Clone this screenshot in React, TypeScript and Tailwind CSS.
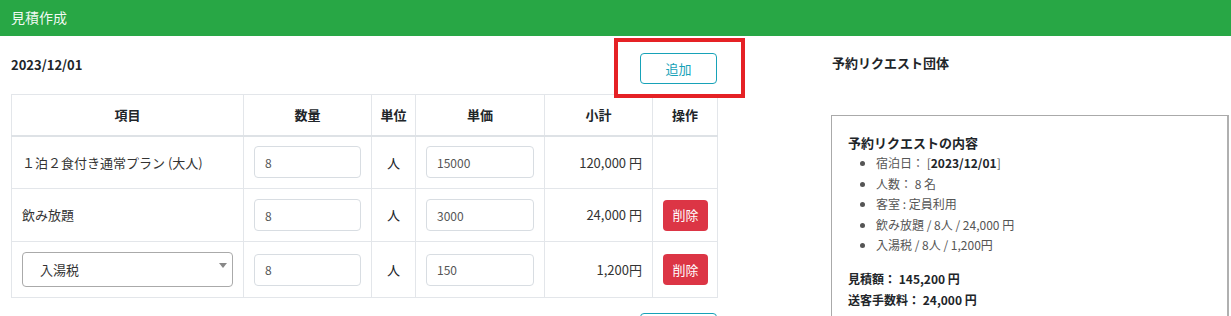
import React from "react";

const inputCls =
  "w-full h-[32px] rounded-[4px] border border-[#d8dde2] bg-white px-[10px] text-[12px] text-[#555] outline-none";

function QtyInput({ v }: { v: string }) {
  return <input className={inputCls} defaultValue={v} readOnly />;
}

function DelBtn() {
  return (
    <button className="h-[31px] w-[45px] rounded-[4px] bg-[#dc3545] text-[13px] text-white">
      削除
    </button>
  );
}

export default function App() {
  const td = "border border-[#e3e6ea] px-[10px] align-middle";
  return (
    <div className="min-h-screen bg-white font-['Noto_Sans_CJK_JP',sans-serif] text-[#212529]">
      <div className="h-[36px] bg-[#28a745] px-[11px] flex items-center">
        <span className="text-[14px] text-white/95 -mt-[2px]">見積作成</span>
      </div>
      <div className="flex">
        <div className="w-[717px] pl-[11px] shrink-0">
          <div className="mt-[17px] flex justify-between">
            <div className="mt-[2px] text-[13px] font-bold leading-[20px]">2023/12/01</div>
            <div className="relative">
              <button className="h-[31px] w-[77px] rounded-[4px] border border-[#17a2b8] text-[13px] text-[#17a2b8]">
                追加
              </button>
              <div className="pointer-events-none absolute left-[-26px] right-[-28px] top-[-15px] bottom-[-14px] border-[4px] border-[#e52125]" />
            </div>
          </div>
          <table className="mt-[10px] w-[706px] border-collapse table-fixed text-[13px]">
            <colgroup>
              <col className="w-[232px]" />
              <col className="w-[128px]" />
              <col className="w-[44px]" />
              <col className="w-[129px]" />
              <col className="w-[108px]" />
              <col className="w-[65px]" />
            </colgroup>
            <thead>
              <tr className="h-[41px]">
                {["項目", "数量", "単位", "単価", "小計", "操作"].map((h) => (
                  <th
                    key={h}
                    className="border border-[#e3e6ea] border-b-2 border-b-[#dee2e6] text-center font-bold text-[13px]"
                  >
                    {h}
                  </th>
                ))}
              </tr>
            </thead>
            <tbody>
              <tr className="h-[53px]">
                <td className={td + " text-[#333]"}>１泊２食付き通常プラン (大人)</td>
                <td className={td}>
                  <QtyInput v="8" />
                </td>
                <td className={td + " text-center px-0"}>人</td>
                <td className={td}>
                  <QtyInput v="15000" />
                </td>
                <td className={td + " text-right text-[#333]"}>120,000 円</td>
                <td className={td}></td>
              </tr>
              <tr className="h-[53px]">
                <td className={td + " text-[#333]"}>飲み放題</td>
                <td className={td}>
                  <QtyInput v="8" />
                </td>
                <td className={td + " text-center px-0"}>人</td>
                <td className={td}>
                  <QtyInput v="3000" />
                </td>
                <td className={td + " text-right text-[#333]"}>24,000 円</td>
                <td className={td}>
                  <DelBtn />
                </td>
              </tr>
              <tr className="h-[56px]">
                <td className={td}>
                  <div className="relative flex h-[35px] items-center rounded-[4px] border border-[#aaa] pl-[17px] text-[13px] text-[#333]">
                    入湯税
                    <span className="absolute right-[5px] top-[10px] h-0 w-0 border-x-[4px] border-t-[5px] border-x-transparent border-t-[#888]" />
                  </div>
                </td>
                <td className={td}>
                  <QtyInput v="8" />
                </td>
                <td className={td + " text-center px-0"}>人</td>
                <td className={td}>
                  <QtyInput v="150" />
                </td>
                <td className={td + " text-right text-[#333]"}>1,200円</td>
                <td className={td}>
                  <DelBtn />
                </td>
              </tr>
            </tbody>
          </table>
          <div className="mt-[15px] flex justify-end">
            <button
              aria-label="保存"
              className="h-[31px] w-[77px] rounded-[4px] border border-[#17a2b8]"
            />
          </div>
        </div>
        <div className="pl-[114px] flex-1">
          <div className="mt-[17px] pl-[1px] text-[13px] font-bold leading-[20px]">予約リクエスト団体</div>
          <div className="mt-[42px] w-[398px] border border-[#aaa] border-r-2 border-r-[#b0b0b0] px-[16px] pt-[17px] pb-[20px]">
            <div className="text-[13px] font-bold leading-[20px]">予約リクエストの内容</div>
            <ul className="list-disc pl-[28px] text-[12px] leading-[20.5px] text-[#555]">
              <li>
                宿泊日： [<span className="font-bold text-[#212529]">2023/12/01</span>]
              </li>
              <li>人数： 8 名</li>
              <li>客室 : 定員利用</li>
              <li>飲み放題 / 8人 / 24,000 円</li>
              <li>入湯税 / 8人 / 1,200円</li>
            </ul>
            <div className="mt-[12px] text-[12px] font-bold leading-[21px]">見積額： 145,200 円</div>
            <div className="text-[12px] font-bold leading-[21px]">送客手数料： 24,000 円</div>
          </div>
        </div>
      </div>
    </div>
  );
}
